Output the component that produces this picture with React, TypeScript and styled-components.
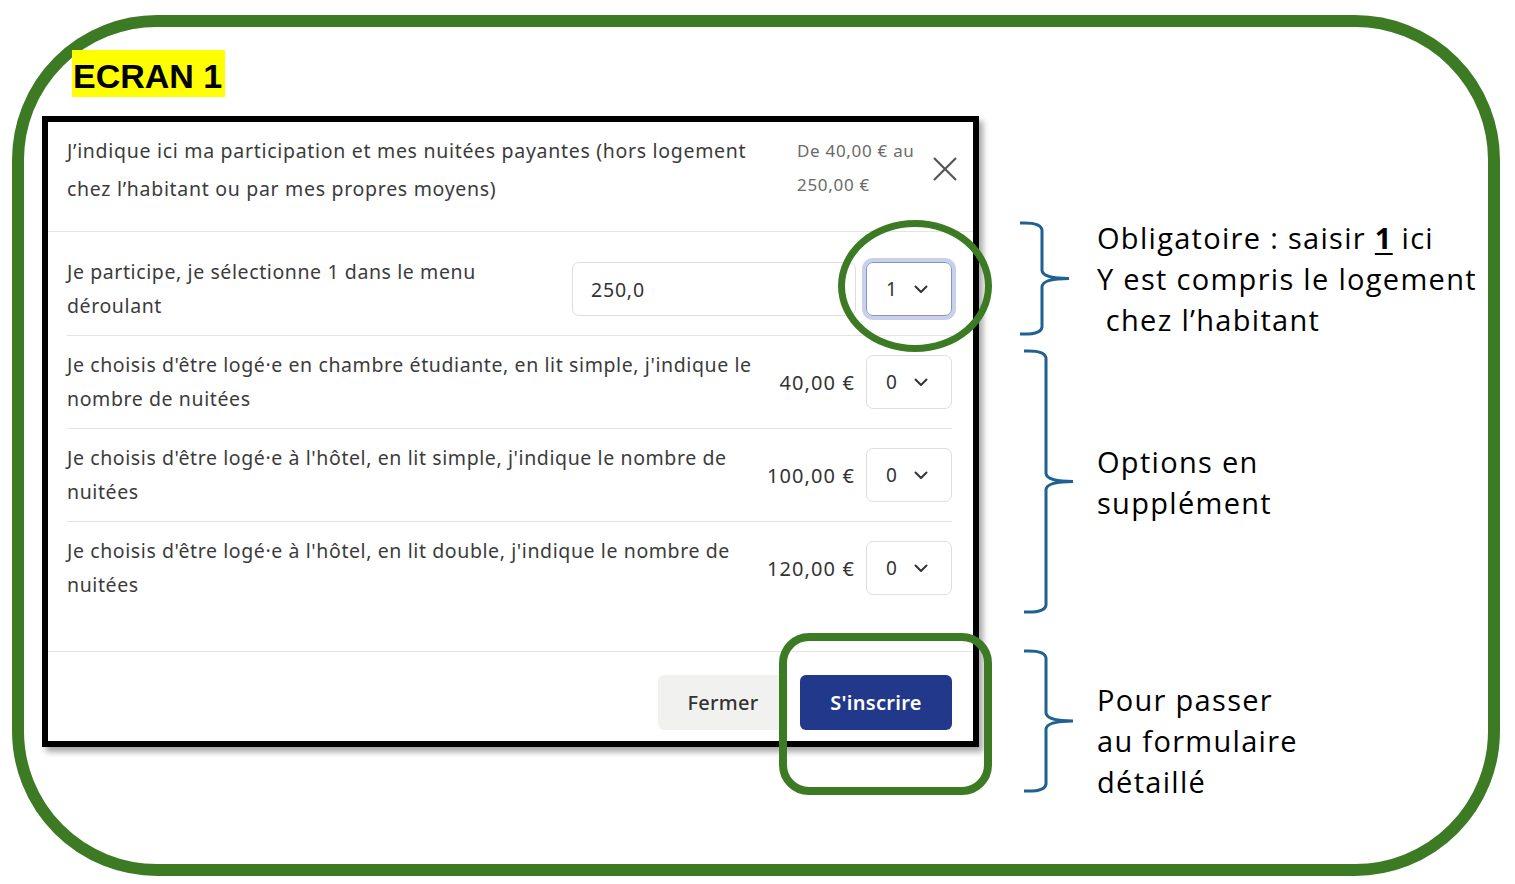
import styled, { createGlobalStyle } from "styled-components";

const GlobalStyle = createGlobalStyle`
  html, body {
    margin: 0;
    padding: 0;
    background: #fff;
  }
  body {
    font-family: "Noto Sans", "Open Sans", sans-serif;
  }
`;

const green = "#3c7b24";

const Frame = styled.div`
  box-sizing: border-box;
  margin: 15px 0 0 12px;
  width: 1488px;
  height: 861px;
  border: 12px solid ${green};
  border-radius: 145px;
  display: flex;
  padding: 23px 0 0 18px;
`;

const LeftColumn = styled.div`
  display: flex;
  flex-direction: column;
`;

const ScreenLabel = styled.div`
  align-self: flex-start;
  box-sizing: border-box;
  margin-left: 30px;
  height: 47px;
  padding: 7px 3px 0 1px;
  line-height: 40px;
  background: #ffff00;
  color: #000;
  font: 700 34px "Liberation Sans", Arial, sans-serif;
`;

const ModalWrap = styled.div`
  position: relative;
  margin-top: 19px;
  width: 937px;
`;

const Modal = styled.div`
  box-sizing: border-box;
  width: 937px;
  height: 631px;
  border: 6px solid #000;
  background: #fff;
  box-shadow: 4px 5px 6px rgba(0, 0, 0, 0.35);
  display: flex;
  flex-direction: column;
`;

const Header = styled.div`
  display: flex;
  align-items: flex-start;
  padding: 10px 16px 23px 19px;
  border-bottom: 1px solid #e4e4e4;
`;

const HeaderText = styled.div`
  width: 700px;
  font-size: 19.5px;
  letter-spacing: 0.7px;
  line-height: 38px;
  color: #3b3b3b;
`;

const HeaderPrice = styled.div`
  width: 120px;
  margin: 2px 0 0 30px;
  font-size: 17px;
  letter-spacing: 0.7px;
  line-height: 34px;
  color: #6a6a6a;
  white-space: nowrap;
`;

const CloseButton = styled.button`
  margin: 25px 0 0 16px;
  padding: 0;
  width: 24px;
  height: 24px;
  border: none;
  background: none;
  color: #555;
  display: flex;
`;

const Body = styled.div`
  display: flex;
  flex-direction: column;
  padding: 11px 21px 37px 19px;
`;

const Row = styled.div`
  display: flex;
  align-items: center;
  padding: 12px 0;
  border-bottom: 1px solid #e4e4e4;
  &:last-child {
    border-bottom: none;
  }
`;

const RowText = styled.div`
  flex: 1;
  font-size: 19.5px;
  letter-spacing: 0.6px;
  line-height: 34px;
  color: #3b3b3b;
  white-space: nowrap;
`;

const Price = styled.div`
  margin-right: 11px;
  font-size: 20px;
  letter-spacing: 1.1px;
  color: #333;
  white-space: nowrap;
`;

const AmountInput = styled.div`
  box-sizing: border-box;
  width: 284px;
  height: 54px;
  margin-right: 10px;
  padding: 0 18px;
  display: flex;
  align-items: center;
  border: 1px solid #dedede;
  border-radius: 7px;
  font-size: 19.5px;
  letter-spacing: 0.8px;
  color: #333;
`;

const Select = styled.div<{ $focused?: boolean }>`
  box-sizing: border-box;
  width: 86px;
  height: 54px;
  padding-left: 19px;
  display: flex;
  align-items: center;
  gap: 17px;
  border: 1px solid ${(p) => (p.$focused ? "#8594cc" : "#dedede")};
  border-radius: 7px;
  box-shadow: ${(p) => (p.$focused ? "0 0 0 4px #c9d0ea" : "none")};
  font-size: 19px;
  color: #333;
`;

const Footer = styled.div`
  flex: 1;
  display: flex;
  justify-content: flex-end;
  align-items: flex-start;
  gap: 12px;
  padding: 23px 21px 0 0;
  border-top: 1px solid #e4e4e4;
`;

const Button = styled.button<{ $primary?: boolean }>`
  height: 55px;
  width: ${(p) => (p.$primary ? "152px" : "130px")};
  border: none;
  border-radius: 6px;
  background: ${(p) => (p.$primary ? "#22388a" : "#f1f1ef")};
  color: ${(p) => (p.$primary ? "#fff" : "#333")};
  font-family: "Noto Sans", sans-serif;
  font-size: 20px;
  letter-spacing: 0.3px;
  font-weight: ${(p) => (p.$primary ? 600 : 500)};
`;

const FocusCircle = styled.div`
  position: absolute;
  left: 796px;
  top: 104px;
  width: 154px;
  height: 132px;
  box-sizing: border-box;
  border: 7px solid ${green};
  border-radius: 50%;
  pointer-events: none;
`;

const FocusBox = styled.div`
  position: absolute;
  left: 737px;
  top: 517px;
  width: 213px;
  height: 162px;
  box-sizing: border-box;
  border: 8px solid ${green};
  border-radius: 30px;
  pointer-events: none;
`;

const RightColumn = styled.div`
  display: flex;
  flex-direction: column;
  margin-left: 40px;
  padding-top: 167px;
`;

const Note = styled.div<{ $offset: number; $indent: number; $gap: number; $top?: boolean }>`
  display: flex;
  align-items: ${(p) => (p.$top ? "flex-start" : "center")};
  margin-top: ${(p) => p.$offset}px;
  padding-left: ${(p) => p.$indent}px;
  gap: ${(p) => p.$gap}px;
`;

const NoteText = styled.div<{ $shift?: number }>`
  margin-top: ${(p) => p.$shift || 0}px;
  font-family: "Open Sans", "Noto Sans", sans-serif;
  font-size: 29px;
  letter-spacing: 1.3px;
  line-height: 41px;
  color: #000;
  white-space: nowrap;
  b {
    text-decoration: underline;
    text-decoration-thickness: 2px;
    text-underline-offset: 4px;
  }
`;

const Chevron = () => (
  <svg width="14" height="9" viewBox="0 0 14 9" fill="none">
    <path d="M1.5 1.5 L7 7 L12.5 1.5" stroke="#333" strokeWidth="2" strokeLinecap="round" strokeLinejoin="round" />
  </svg>
);

const CloseIcon = () => (
  <svg width="24" height="24" viewBox="0 0 24 24" fill="none">
    <path d="M1 1 L23 23 M23 1 L1 23" stroke="currentColor" strokeWidth="2.2" />
  </svg>
);

const Brace = ({ height }: { height: number }) => {
  const m = height / 2;
  const d = `M1 2 Q22 1 23 9 V${m - 8} Q24 ${m} 50 ${m} M50 ${m} Q24 ${m} 23 ${m + 8} V${height - 9} Q22 ${height - 1} 1 ${height - 2}`;
  return (
    <svg width="52" height={height} viewBox={`0 0 52 ${height}`} fill="none">
      <path d={d} stroke="#1f6190" strokeWidth="3" />
    </svg>
  );
};

const options = [
  { text: <>Je choisis d'être logé·e en chambre étudiante, en lit simple, j'indique le<br />nombre de nuitées</>, price: "40,00 €" },
  { text: <>Je choisis d'être logé·e à l'hôtel, en lit simple, j'indique le nombre de<br />nuitées</>, price: "100,00 €" },
  { text: <>Je choisis d'être logé·e à l'hôtel, en lit double, j'indique le nombre de<br />nuitées</>, price: "120,00 €" },
];

export default function App() {
  return (
    <>
      <GlobalStyle />
      <Frame>
        <LeftColumn>
          <ScreenLabel>ECRAN 1</ScreenLabel>
          <ModalWrap>
            <Modal>
              <Header>
                <HeaderText>
                  J’indique ici ma participation et mes nuitées payantes (hors logement<br />
                  chez l’habitant ou par mes propres moyens)
                </HeaderText>
                <HeaderPrice>
                  De 40,00 € au<br />250,00 €
                </HeaderPrice>
                <CloseButton aria-label="Fermer">
                  <CloseIcon />
                </CloseButton>
              </Header>
              <Body>
                <Row>
                  <RowText>
                    Je participe, je sélectionne 1 dans le menu<br />déroulant
                  </RowText>
                  <AmountInput>250,0</AmountInput>
                  <Select $focused>
                    1 <Chevron />
                  </Select>
                </Row>
                {options.map((o) => (
                  <Row key={o.price}>
                    <RowText>{o.text}</RowText>
                    <Price>{o.price}</Price>
                    <Select>
                      0 <Chevron />
                    </Select>
                  </Row>
                ))}
              </Body>
              <Footer>
                <Button>Fermer</Button>
                <Button $primary>S'inscrire</Button>
              </Footer>
            </Modal>
            <FocusCircle />
            <FocusBox />
          </ModalWrap>
        </LeftColumn>
        <RightColumn>
          <Note $offset={0} $indent={0} $gap={26}>
            <Brace height={115} />
            <NoteText>
              Obligatoire : saisir <b>1</b> ici<br />
              Y est compris le logement<br />
              &nbsp;chez l’habitant
            </NoteText>
          </Note>
          <Note $offset={9} $indent={4} $gap={22}>
            <Brace height={265} />
            <NoteText>
              Options en<br />supplément
            </NoteText>
          </Note>
          <Note $offset={35} $indent={4} $gap={22} $top>
            <Brace height={144} />
            <NoteText $shift={30}>
              Pour passer<br />au formulaire<br />détaillé
            </NoteText>
          </Note>
        </RightColumn>
      </Frame>
    </>
  );
}
